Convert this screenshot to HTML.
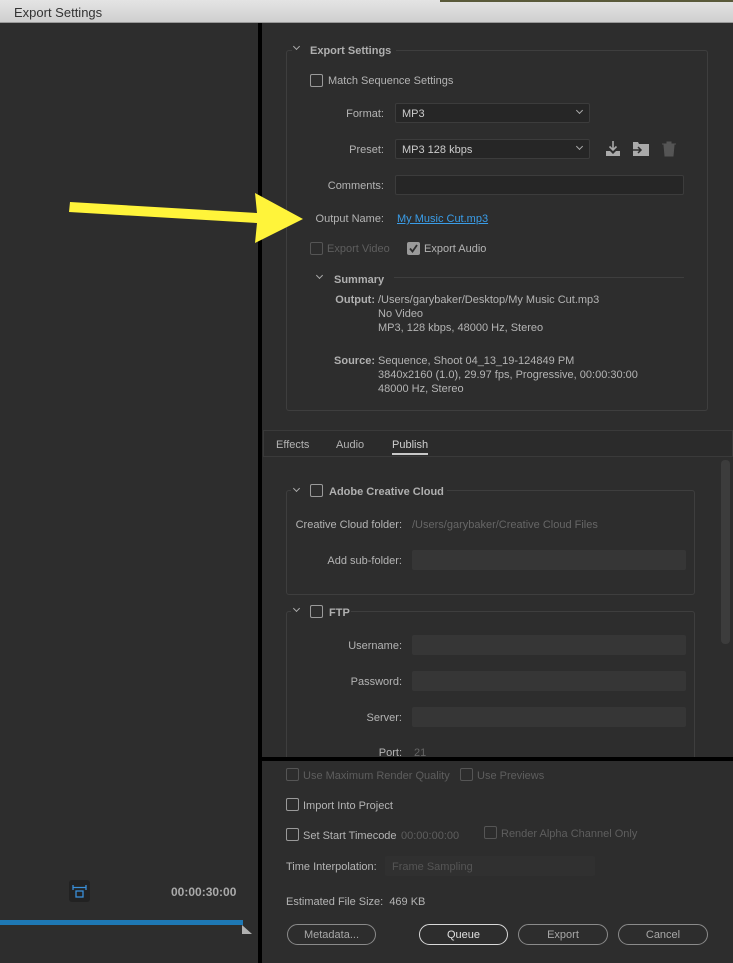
<!DOCTYPE html>
<html><head><meta charset="utf-8"><style>
*{margin:0;padding:0;box-sizing:border-box}
body{width:733px;height:963px;background:#2d2d2d;position:relative;overflow:hidden;font-family:"Liberation Sans",sans-serif;font-size:11px;color:#b4b4b4}
.a{position:absolute;white-space:nowrap}
.t{position:absolute;white-space:nowrap;line-height:14px;font-size:11px;margin-top:1px}
.r{text-align:right}
.cb{position:absolute;width:13px;height:13px;border:1.5px solid #9a9a9a;border-radius:2px}
.cbd{border-color:#555}
.in{position:absolute;background:#262626;border:1px solid #3c3c3c;border-radius:2px}
.f{position:absolute;background:#363636;border-radius:2px}
.box{position:absolute;border:1px solid #3e3e3e;border-radius:3px}
.chev{position:absolute;width:6px;height:6px;border-right:1.3px solid #aaa;border-bottom:1.3px solid #aaa;transform:rotate(45deg)}
.btn{position:absolute;height:21px;border:1.5px solid #8a8a8a;border-radius:11px;text-align:center;line-height:16px;padding-top:2px;color:#a8a8a8;font-size:11px}
b{font-weight:bold;color:#b0b0b0}
</style></head><body>
<div class="a" style="left:0;top:0;width:733px;height:23px;background:linear-gradient(#e4e4e4,#cfcfcf);border-bottom:1px solid #999"></div>
<div class="t" style="left:14px;top:4px;font-size:13px;color:#333;line-height:16px">Export Settings</div>
<div class="a" style="left:440px;top:0;width:293px;height:2px;background:#5a5a3a"></div>
<div class="a" style="left:258px;top:23px;width:4px;height:940px;background:#000"></div>

<div class="box" style="left:286px;top:50px;width:422px;height:361px"></div>
<div class="a" style="left:292px;top:40px;width:104px;height:18px;background:#2d2d2d"></div>
<div class="chev" style="left:294px;top:44px;width:5px;height:5px"></div>
<div class="t" style="left:310px;top:43px"><b>Export Settings</b></div>
<div class="cb" style="left:310px;top:74px"></div>
<div class="t" style="left:328px;top:73px">Match Sequence Settings</div>
<div class="t r" style="left:300px;width:84px;top:106px">Format:</div>
<div class="in" style="left:395px;top:103px;width:195px;height:20px"></div>
<div class="t" style="left:402px;top:106px;color:#ccc">MP3</div>
<div class="chev" style="left:577px;top:108px;width:5px;height:5px"></div>
<div class="t r" style="left:300px;width:84px;top:142px">Preset:</div>
<div class="in" style="left:395px;top:139px;width:195px;height:20px"></div>
<div class="t" style="left:402px;top:142px;color:#ccc">MP3 128 kbps</div>
<div class="chev" style="left:577px;top:144px;width:5px;height:5px"></div>
<svg class="a" style="left:604px;top:139px" width="80" height="20" viewBox="0 0 80 20">
<path d="M9 2v9M5.5 7.5L9 11l3.5-3.5" stroke="#aaa" stroke-width="1.6" fill="none"/>
<path d="M2 12h4l3 3 3-3h4v5H2z" fill="#aaa"/>
<path d="M29 3h5l1 2h10v12H29z" fill="#aaa"/><path d="M29 11h8M34 8l3 3-3 3" stroke="#2d2d2d" stroke-width="1.5" fill="none"/>
<path d="M58 5h14M63 5V3h4v2M60 6h10l-1 11h-8z" fill="#555" stroke="#555"/>
</svg>
<div class="t r" style="left:300px;width:84px;top:178px">Comments:</div>
<div class="in" style="left:395px;top:175px;width:289px;height:20px"></div>
<div class="t r" style="left:300px;width:84px;top:211px">Output Name:</div>
<div class="t" style="left:397px;top:211px;color:#3a9de8;text-decoration:underline">My Music Cut.mp3</div>
<div class="cb cbd" style="left:310px;top:242px"></div>
<div class="t" style="left:327px;top:241px;color:#5e5e5e">Export Video</div>
<div class="a" style="left:407px;top:242px;width:13px;height:13px;background:#9a9a9a;border-radius:2px"></div>
<svg class="a" style="left:407px;top:242px" width="13" height="13"><path d="M3 6.5l2.5 3L10 3" stroke="#2d2d2d" stroke-width="1.8" fill="none"/></svg>
<div class="t" style="left:424px;top:241px">Export Audio</div>
<div class="chev" style="left:317px;top:273px;width:5px;height:5px"></div>
<div class="t" style="left:334px;top:272px"><b>Summary</b></div>
<div class="a" style="left:394px;top:277px;width:290px;height:1px;background:#3e3e3e"></div>
<div class="t r" style="left:300px;width:75px;top:292px"><b>Output:</b></div>
<div class="t" style="left:378px;top:292px;line-height:14px">/Users/garybaker/Desktop/My Music Cut.mp3<br>No Video<br>MP3, 128 kbps, 48000 Hz, Stereo</div>
<div class="t r" style="left:300px;width:75px;top:353px"><b>Source:</b></div>
<div class="t" style="left:378px;top:353px;line-height:14px">Sequence, Shoot 04_13_19-124849 PM<br>3840x2160 (1.0), 29.97 fps, Progressive, 00:00:30:00<br>48000 Hz, Stereo</div>

<div class="a" style="left:263px;top:430px;width:470px;height:27px;border:1px solid #3a3a3a;background:#2b2b2b"></div>
<div class="t" style="left:276px;top:437px">Effects</div>
<div class="t" style="left:336px;top:437px">Audio</div>
<div class="t" style="left:392px;top:437px;color:#d0d0d0">Publish</div>
<div class="a" style="left:392px;top:453px;width:36px;height:2px;background:#c8c8c8"></div>
<div class="a" style="left:721px;top:460px;width:9px;height:184px;background:#3c3c3c;border-radius:4px"></div>

<div class="box" style="left:286px;top:490px;width:409px;height:105px"></div>
<div class="a" style="left:291px;top:482px;width:156px;height:18px;background:#2d2d2d"></div>
<div class="chev" style="left:294px;top:486px;width:5px;height:5px"></div>
<div class="cb" style="left:310px;top:484px"></div>
<div class="t" style="left:329px;top:484px"><b>Adobe Creative Cloud</b></div>
<div class="t r" style="left:280px;width:122px;top:517px">Creative Cloud folder:</div>
<div class="t" style="left:412px;top:517px;color:#666">/Users/garybaker/Creative Cloud Files</div>
<div class="t r" style="left:280px;width:122px;top:553px">Add sub-folder:</div>
<div class="f" style="left:412px;top:550px;width:274px;height:20px"></div>

<div class="box" style="left:286px;top:611px;width:409px;height:160px"></div>
<div class="a" style="left:291px;top:603px;width:60px;height:18px;background:#2d2d2d"></div>
<div class="chev" style="left:294px;top:606px;width:5px;height:5px"></div>
<div class="cb" style="left:310px;top:605px"></div>
<div class="t" style="left:329px;top:605px"><b>FTP</b></div>
<div class="t r" style="left:280px;width:122px;top:638px">Username:</div>
<div class="f" style="left:412px;top:635px;width:274px;height:20px"></div>
<div class="t r" style="left:280px;width:122px;top:674px">Password:</div>
<div class="f" style="left:412px;top:671px;width:274px;height:20px"></div>
<div class="t r" style="left:280px;width:122px;top:710px">Server:</div>
<div class="f" style="left:412px;top:707px;width:274px;height:20px"></div>
<div class="t r" style="left:280px;width:122px;top:745px">Port:</div>
<div class="t" style="left:414px;top:745px;color:#666">21</div>
<div class="a" style="left:262px;top:757px;width:471px;height:4px;background:#000"></div>
<div class="a" style="left:262px;top:761px;width:471px;height:202px;background:#2d2d2d"></div>

<div class="cb cbd" style="left:286px;top:768px"></div>
<div class="t" style="left:303px;top:768px;color:#5e5e5e">Use Maximum Render Quality</div>
<div class="cb cbd" style="left:460px;top:768px"></div>
<div class="t" style="left:477px;top:768px;color:#5e5e5e">Use Previews</div>
<div class="cb" style="left:286px;top:798px"></div>
<div class="t" style="left:303px;top:798px">Import Into Project</div>
<div class="cb" style="left:286px;top:828px"></div>
<div class="t" style="left:303px;top:828px">Set Start Timecode</div>
<div class="t" style="left:401px;top:828px;color:#5e5e5e">00:00:00:00</div>
<div class="cb cbd" style="left:484px;top:826px"></div>
<div class="t" style="left:501px;top:826px;color:#5e5e5e">Render Alpha Channel Only</div>
<div class="t" style="left:286px;top:859px">Time Interpolation:</div>
<div class="f" style="left:385px;top:856px;width:210px;height:20px;background:#303030"></div>
<div class="t" style="left:392px;top:859px;color:#555">Frame Sampling</div>
<div class="t" style="left:286px;top:894px">Estimated File Size:&nbsp; 469 KB</div>
<div class="btn" style="left:287px;top:924px;width:89px">Metadata...</div>
<div class="btn" style="left:419px;top:924px;width:89px;border-color:#d8d8d8;color:#e0e0e0">Queue</div>
<div class="btn" style="left:518px;top:924px;width:90px">Export</div>
<div class="btn" style="left:618px;top:924px;width:90px">Cancel</div>

<div class="a" style="left:69px;top:880px;width:21px;height:22px;background:#222;border-radius:3px"></div>
<svg class="a" style="left:69px;top:880px" width="21" height="22"><path d="M4 5v5M17 5v5M4 7.5h13" stroke="#3a8fd8" stroke-width="1.3" fill="none"/><rect x="7" y="11" width="7" height="6" stroke="#3a8fd8" stroke-width="1.3" fill="none"/></svg>
<div class="t" style="left:171px;top:884px;font-weight:bold;color:#aaa;font-size:12px">00:00:30:00</div>
<div class="a" style="left:0;top:920px;width:243px;height:5px;background:#1e78b4"></div>
<svg class="a" style="left:242px;top:925px" width="12" height="10"><path d="M0 0L10 9H0z" fill="#b0b0b0"/></svg>

<svg class="a" style="left:0;top:0" width="320" height="260"><path d="M70 202L257 213L255 193L303 219L255 243L257 223L69 212Z" fill="#fff43a"/></svg>
</body></html>
